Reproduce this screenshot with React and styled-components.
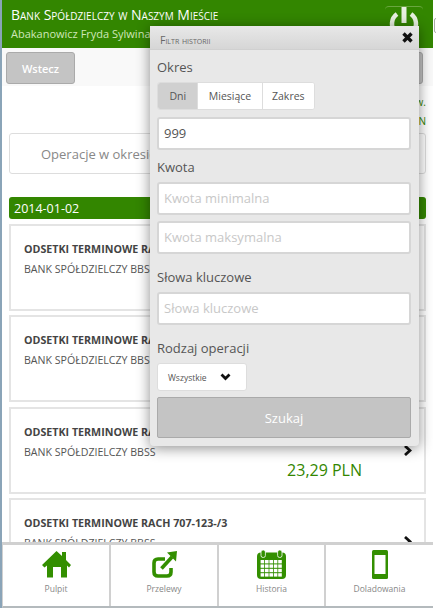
import React from 'react';
import styled, { createGlobalStyle } from 'styled-components';

const GlobalStyle = createGlobalStyle`
  html, body {
    margin: 0;
    padding: 0;
    height: 100%;
    overflow: hidden;
    background: #fff;
    font-family: "Open Sans", "Liberation Sans", sans-serif;
    color: #555;
  }
`;

const Page = styled.div`
  position: relative;
  width: 436px;
  height: 608px;
  overflow: hidden;
  background: #fff;
  border-left: 2px solid #8aa4b8;
  box-sizing: border-box;
`;

const Shell = styled.div`
  position: relative;
  width: 431px;
  height: 608px;
  overflow: hidden;
`;

const EdgeTab = styled.div`
  position: absolute;
  right: -1px;
  top: 18px;
  width: 3px;
  height: 15px;
  border: 1px solid #aaa;
  border-radius: 2px 0 0 2px;
  box-sizing: border-box;
`;

const Header = styled.header`
  height: 48px;
  background: #338600;
  padding: 6px 9px;
  box-sizing: border-box;
`;

const BankName = styled.div`
  color: #fff;
  font-size: 14px;
  line-height: 18px;
  font-variant: small-caps;
  white-space: nowrap;
`;

const UserName = styled.div`
  color: #cfe6b8;
  font-size: 11px;
  line-height: 18px;
  margin-top: 1px;
  white-space: nowrap;
`;

const PowerButton = styled.div`
  position: absolute;
  top: 6px;
  right: 10px;
  width: 38px;
  height: 36px;
  border-top: 1px solid #6aa63f;
  border-radius: 4px;
`;

const Toolbar = styled.div`
  height: 38px;
  padding: 4px 10px 4px 4px;
  background: #f9f9f9;
  box-sizing: border-box;
  display: flex;
  justify-content: space-between;
`;

const BackButton = styled.div`
  width: 69px;
  height: 32px;
  background: #c4c4c4;
  border: 1px solid #aaa;
  border-radius: 3px;
  box-sizing: border-box;
  color: #fff;
  font-size: 11px;
  font-weight: 600;
  display: flex;
  align-items: center;
  justify-content: center;
`;

const ToolbarRight = styled(BackButton)`
  width: 40px;
`;

const Content = styled.main`
  padding: 0 7px;
`;

const SideInfo = styled.div`
  height: 47px;
  padding-top: 7px;
  box-sizing: border-box;
  text-align: right;
  font-size: 10px;
  line-height: 19px;
  color: #338600;
`;

const PeriodBox = styled.div`
  height: 41px;
  border: 1px solid #ddd;
  border-radius: 3px;
  box-sizing: border-box;
  padding-left: 31px;
  font-size: 13px;
  line-height: 41px;
  color: #888;
`;

const DateBar = styled.div`
  margin-top: 23px;
  height: 22px;
  background: #338600;
  border-radius: 3px;
  color: #fff;
  font-size: 12.5px;
  line-height: 23px;
  padding-left: 5px;
  margin-bottom: 5px;
`;

const OperationCard = styled.article`
  position: relative;
  height: 87px;
  margin-bottom: 4.33px;
  border: 2px solid #e4e4e4;
  box-sizing: border-box;
  padding: 14px 13px 13px;
`;

const OperationTitle = styled.div`
  font-size: 10.7px;
  line-height: 18px;
  font-weight: 700;
  color: #444;
  white-space: nowrap;
`;

const OperationBank = styled.div`
  font-size: 10.6px;
  line-height: 18px;
  margin-top: 2px;
  color: #555;
`;

const Chevron = styled.svg`
  position: absolute;
  right: 12px;
  top: 36px;
  width: 9px;
  height: 11px;
`;

const Amount = styled.div`
  position: absolute;
  right: 62px;
  top: 50px;
  font-size: 16px;
  line-height: 22px;
  color: #338600;
`;

const Modal = styled.section`
  position: absolute;
  top: 26px;
  left: 148px;
  width: 269px;
  height: 420px;
  background: #e8e8e8;
  border-radius: 0 0 4px 4px;
  box-shadow: 0 2px 14px rgba(0, 0, 0, 0.45);
`;

const ModalHead = styled.div`
  height: 24px;
  background: linear-gradient(#e8e8e8, #d6d6d6);
  border-bottom: 1px solid #d0d0d0;
  box-sizing: border-box;
  position: relative;
  padding: 6px 10px 0;
  font-size: 10.5px;
  line-height: 16px;
  font-variant: small-caps;
  color: #666;
`;

const CloseIcon = styled.svg`
  position: absolute;
  right: 6px;
  top: 6px;
  width: 11px;
  height: 11px;
`;

const ModalBody = styled.div`
  padding: 8px 7px;
  display: flex;
  flex-direction: column;
`;

const Label = styled.div`
  font-size: 13px;
  line-height: 18px;
  color: #555;
  margin-top: ${(p) => p.$top || 0}px;
  margin-bottom: 6px;
`;

const Tabs = styled.div`
  display: flex;
  width: 158px;
  height: 28px;
  border-radius: 3px;
  background: #fff;
  border: 1px solid #ddd;
  box-sizing: border-box;
  overflow: hidden;
`;

const Tab = styled.div`
  font-size: 10.5px;
  line-height: 26px;
  text-align: center;
  width: ${(p) => p.$w}px;
  color: #555;
  background: ${(p) => (p.$active ? '#d0d0d0' : '#fff')};
  border-left: ${(p) => (p.$first ? 'none' : '1px solid #ddd')};
  box-sizing: border-box;
`;

const Field = styled.div`
  width: 254px;
  height: 33px;
  margin-top: ${(p) => p.$top || 0}px;
  background: #fff;
  border: 2px solid #d6d6d6;
  border-radius: 3px;
  box-sizing: border-box;
  padding-left: 5px;
  font-size: 13px;
  line-height: 29px;
  color: ${(p) => (p.$placeholder ? '#c8c8c8' : '#555')};
`;

const SelectBox = styled.div`
  width: 90px;
  height: 28px;
  background: #fff;
  border: 1px solid #ddd;
  border-radius: 3px;
  box-sizing: border-box;
  padding-left: 10px;
  display: flex;
  align-items: center;
  gap: 13px;
  font-size: 8.5px;
  color: #555;
`;

const SearchButton = styled.div`
  width: 254px;
  height: 41px;
  margin-top: 6px;
  background: #c4c4c4;
  border: 1px solid #aaa;
  border-radius: 2px;
  box-sizing: border-box;
  color: #fff;
  font-size: 13px;
  display: flex;
  align-items: center;
  justify-content: center;
`;

const BottomNav = styled.nav`
  position: absolute;
  left: 0;
  right: 0;
  bottom: 0;
  height: 66px;
  display: flex;
  background: #fff;
  border-top: 3px solid #d0d0d0;
  border-left: 1px solid #d0d0d0;
  border-bottom: 2px solid #b4babd;
  box-sizing: border-box;
`;

const NavItem = styled.div`
  flex: ${(p) => p.$w}px 0 0;
  display: flex;
  flex-direction: column;
  align-items: center;
  border-right: 2px solid #d0d0d0;
  box-sizing: border-box;
  padding-top: 5px;
  &:last-child {
    border-right: none;
  }
`;

const NavIconSlot = styled.div`
  height: 29px;
  display: flex;
  align-items: center;
  justify-content: center;
`;

const NavLabel = styled.span`
  font-size: 8.5px;
  line-height: 14px;
  margin-top: 3px;
  color: #888;
`;

const GREEN = '#338f00';

const HomeIcon = () => (
  <svg width="29" height="27" viewBox="0 0 29 27">
    <path
      fill={GREEN}
      d="M14.5 0 L20 5 V1 H24 V9 L29 14 L27 16.5 L25 14.5 V26.5 H19 V16 H11 V26.5 H5 V14.5 L2.5 16.5 L0 14 Z"
    />
  </svg>
);

const ShareIcon = () => (
  <svg width="25" height="27" viewBox="0 0 25 27" fill="none" stroke={GREEN}>
    <path strokeWidth="3.6" d="M13 8 H6 Q2 8 2 12 V21 Q2 25 6 25 H15 Q19 25 19 21 V17" />
    <path strokeWidth="3.6" d="M9.5 17.5 L20 6" />
    <path fill={GREEN} stroke="none" d="M15 1.5 L25 0 L24 10.5 Z" />
  </svg>
);

const CalendarIcon = () => (
  <svg width="29" height="29" viewBox="0 0 29 29" fill={GREEN}>
    <rect x="0" y="2.5" width="29" height="26.5" rx="4" />
    <rect x="4" y="0" width="4.4" height="7.5" rx="2" stroke="#fff" strokeWidth="0.8" />
    <rect x="20.6" y="0" width="4.4" height="7.5" rx="2" stroke="#fff" strokeWidth="0.8" />
    {[10, 14.4, 18.8, 23.2].flatMap((y) =>
      [3.6, 8, 12.4, 16.8, 21.2].map((x) => (
        <rect key={`${x}-${y}`} x={x} y={y} width="3.6" height="3.4" fill="#fff" />
      ))
    )}
  </svg>
);

const PhoneIcon = () => (
  <svg width="16" height="29" viewBox="0 0 16 29">
    <rect width="16" height="29" rx="1.5" fill={GREEN} />
    <rect x="2.5" y="5" width="11" height="19" fill="#fff" />
  </svg>
);

const operations = [
  { title: 'ODSETKI TERMINOWE RACH 707-123-/3' },
  { title: 'ODSETKI TERMINOWE RACH 707-123-/3' },
  { title: 'ODSETKI TERMINOWE RACH 707-123-/3', amount: '23,29 PLN' },
  { title: 'ODSETKI TERMINOWE RACH 707-123-/3' },
];

export default function App() {
  return (
    <Page>
      <GlobalStyle />
      <Shell>
        <Header>
          <BankName>Bank Spółdzielczy w Naszym Mieście</BankName>
          <UserName>Abakanowicz Fryda Sylwina</UserName>
          <PowerButton>
            <svg width="38" height="36" viewBox="0 0 38 36" fill="none" stroke="#e8f0e0">
              <path d="M12 7 A12 12 0 1 0 26 7" strokeWidth="4.5" />
              <path d="M19 0 V16" strokeWidth="5" />
            </svg>
          </PowerButton>
        </Header>
        <Toolbar>
          <BackButton>Wstecz</BackButton>
          <ToolbarRight />
        </Toolbar>
        <Content>
          <SideInfo>
            w.
            <br />
            N
          </SideInfo>
          <PeriodBox>Operacje w okresie</PeriodBox>
          <DateBar>2014-01-02</DateBar>
          {operations.map((op, i) => (
            <OperationCard key={i}>
              <OperationTitle>{op.title}</OperationTitle>
              <OperationBank>BANK SPÓŁDZIELCZY BBSS</OperationBank>
              <Chevron viewBox="0 0 9 11">
                <path d="M2 1 L7 5.5 L2 10" fill="none" stroke="#111" strokeWidth="2.8" />
              </Chevron>
              {op.amount && <Amount>{op.amount}</Amount>}
            </OperationCard>
          ))}
        </Content>
        <BottomNav>
          <NavItem $w={108}>
            <NavIconSlot><HomeIcon /></NavIconSlot>
            <NavLabel>Pulpit</NavLabel>
          </NavItem>
          <NavItem $w={108}>
            <NavIconSlot><ShareIcon /></NavIconSlot>
            <NavLabel>Przelewy</NavLabel>
          </NavItem>
          <NavItem $w={107}>
            <NavIconSlot><CalendarIcon /></NavIconSlot>
            <NavLabel>Historia</NavLabel>
          </NavItem>
          <NavItem $w={107}>
            <NavIconSlot><PhoneIcon /></NavIconSlot>
            <NavLabel>Doladowania</NavLabel>
          </NavItem>
        </BottomNav>
        <Modal>
          <ModalHead>
            Filtr historii
            <CloseIcon viewBox="0 0 11 11">
              <path d="M1.5 1.5 L9.5 9.5 M9.5 1.5 L1.5 9.5" stroke="#111" strokeWidth="3.4" />
            </CloseIcon>
          </ModalHead>
          <ModalBody>
            <Label>Okres</Label>
            <Tabs>
              <Tab $w={40} $active $first>Dni</Tab>
              <Tab $w={65}>Miesiące</Tab>
              <Tab $w={53}>Zakres</Tab>
            </Tabs>
            <Field $top={7}>999</Field>
            <Label $top={8}>Kwota</Label>
            <Field $placeholder>Kwota minimalna</Field>
            <Field $placeholder $top={6}>Kwota maksymalna</Field>
            <Label $top={14}>Słowa kluczowe</Label>
            <Field $placeholder>Słowa kluczowe</Field>
            <Label $top={14}>Rodzaj operacji</Label>
            <SelectBox>
              Wszystkie
              <svg width="11" height="8" viewBox="0 0 11 8">
                <path d="M1.5 1.5 L5.5 5.5 L9.5 1.5" fill="none" stroke="#111" strokeWidth="2.8" />
              </svg>
            </SelectBox>
            <SearchButton>Szukaj</SearchButton>
          </ModalBody>
        </Modal>
      </Shell>
      <EdgeTab />
    </Page>
  );
}
